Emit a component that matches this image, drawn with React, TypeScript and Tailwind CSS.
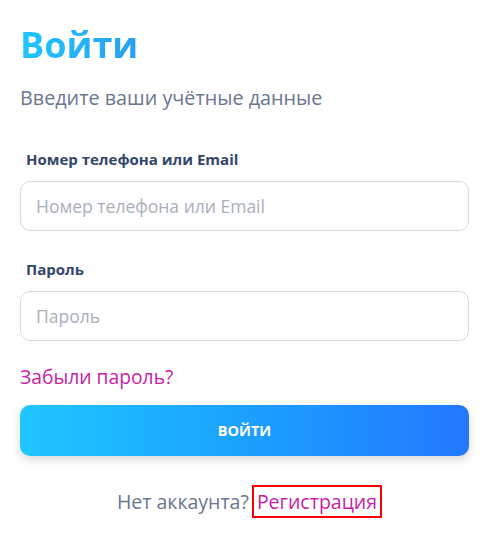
const font = { fontFamily: '"Open Sans", "Noto Sans", sans-serif' }

function Field({ label, placeholder, type = 'text' }: { label: string; placeholder: string; type?: string }) {
  return (
    <div className="flex flex-col">
      <label className="pl-[6px] text-[15px] font-bold leading-[20px] text-[#33466a]">{label}</label>
      <input
        type={type}
        placeholder={placeholder}
        className="mt-[12px] h-[50px] w-full rounded-[10px] border border-[#d6d9de] bg-white px-[15px] text-[17.5px] text-slate-700 outline-none placeholder:text-[#a9b0ba]"
      />
    </div>
  )
}

export default function App() {
  return (
    <div className="min-h-[538px] bg-white px-[20px] pt-[20px]" style={font}>
      <h1 className="w-fit bg-gradient-to-r from-[#1fc6ff] to-[#2a9ff2] bg-clip-text text-[36px] font-bold leading-[50px] text-transparent">
        Войти
      </h1>
      <p className="mt-[14px] text-[19.8px] leading-[28px] text-[#6b7691]">Введите ваши учётные данные</p>

      <div className="mt-[37px] flex flex-col gap-[28px] pr-[10px]">
        <Field label="Номер телефона или Email" placeholder="Номер телефона или Email" />
        <Field label="Пароль" placeholder="Пароль" type="password" />
      </div>

      <div className="mt-[23px] pr-[10px]">
        <a href="#" className="text-[19.3px] leading-[26px] text-[#c81ea5]">Забыли пароль?</a>
        <button className="mt-[15px] h-[51px] w-full rounded-[10px] bg-gradient-to-r from-[#22c7ff] to-[#2377ff] text-[14.5px] font-bold text-white shadow-[0_4px_10px_rgba(0,0,0,0.15)]">
          ВОЙТИ
        </button>
      </div>

      <p className="mt-[31px] text-center text-[19.5px] leading-[30px] text-[#6b7691]">
        Нет аккаунта?
        <a href="#" className="ml-[3px] border-2 border-[#ff0000] px-[3px] py-[1px] text-[#c81ea5]">Регистрация</a>
      </p>
    </div>
  )
}
